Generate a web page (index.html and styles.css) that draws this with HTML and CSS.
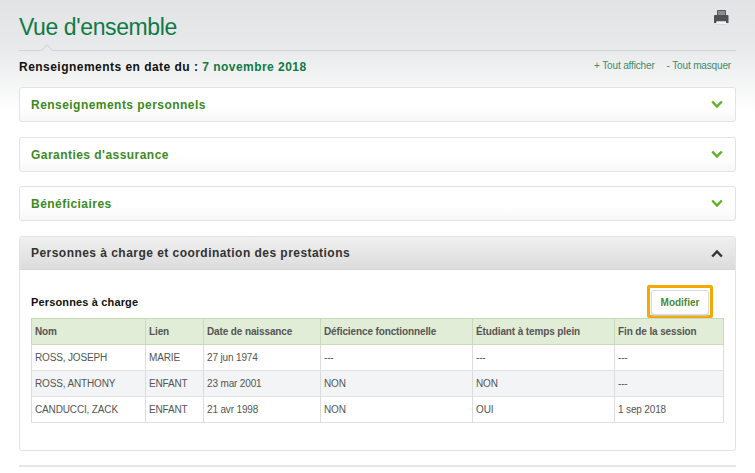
FILE: index.html
```html
<!DOCTYPE html>
<html lang="fr">
<head>
<meta charset="utf-8">
<title>Vue d'ensemble</title>
<link rel="stylesheet" href="styles.css">
</head>
<body>
<main class="page">
  <header class="head">
    <h1>Vue d'ensemble</h1>
    <svg class="print" width="16" height="18" viewBox="0 0 16 18" aria-hidden="true">
      <path fill="#8a8c8e" stroke="#55585a" d="M4.500 .5h8v5h-8z"/>
      <path fill="#4f5254" d="M2 5h12.500a1 1 0 0 1 1 1v7h-2.500v-1.500H3.500V13H1V6a1 1 0 0 1 1-1z"/>
      <path fill="#f4f4f4" d="M3.500 11.500h9.500V14H3.500z"/>
      <path fill="#d8d9da" d="M3 14h10.500v1H3z"/>
      <path fill="#e6e7e8" d="M2.500 15h11.500v2H2.500z"/>
    </svg>
  </header>
  <div class="rule"><span class="notch"></span></div>
  <div class="daterow">
    <p class="asof">Renseignements en date du : <span class="date">7 novembre 2018</span></p>
    <p class="toggles"><a>+ Tout afficher</a><a>- Tout masquer</a></p>
  </div>

  <section class="panel closed">
    <h2>Renseignements personnels</h2>
    <svg class="chev" width="12" height="9" viewBox="0 0 12 9" aria-hidden="true"><path d="M1.200 1.500 6 6.500l4.800-5" fill="none" stroke="#5cb31f" stroke-width="2.400"/></svg>
  </section>
  <section class="panel closed short">
    <h2>Garanties d'assurance</h2>
    <svg class="chev" width="12" height="9" viewBox="0 0 12 9" aria-hidden="true"><path d="M1.200 1.500 6 6.500l4.800-5" fill="none" stroke="#5cb31f" stroke-width="2.400"/></svg>
  </section>
  <section class="panel closed">
    <h2>Bénéficiaires</h2>
    <svg class="chev" width="12" height="9" viewBox="0 0 12 9" aria-hidden="true"><path d="M1.200 1.500 6 6.500l4.800-5" fill="none" stroke="#5cb31f" stroke-width="2.400"/></svg>
  </section>

  <section class="panel open">
    <div class="panelhead">
      <h2>Personnes à charge et coordination des prestations</h2>
      <svg class="chev" width="12" height="9" viewBox="0 0 12 9" aria-hidden="true"><path d="M1.200 7.500 6 2.500l4.800 5" fill="none" stroke="#333" stroke-width="2.400"/></svg>
    </div>
    <div class="panelbody">
      <div class="tabletop">
        <h3>Personnes à charge</h3>
        <div class="highlight"><button class="edit" type="button">Modifier</button></div>
      </div>
      <table>
        <colgroup>
          <col class="c1"><col class="c2"><col class="c3"><col class="c4"><col class="c5"><col class="c6">
        </colgroup>
        <thead>
          <tr><th>Nom</th><th>Lien</th><th>Date de naissance</th><th>Déficience fonctionnelle</th><th>Étudiant à temps plein</th><th>Fin de la session</th></tr>
        </thead>
        <tbody>
          <tr><td>ROSS, JOSEPH</td><td>MARIE</td><td>27 jun 1974</td><td>---</td><td>---</td><td>---</td></tr>
          <tr class="alt"><td>ROSS, ANTHONY</td><td>ENFANT</td><td>23 mar 2001</td><td>NON</td><td>NON</td><td>---</td></tr>
          <tr><td>CANDUCCI, ZACK</td><td>ENFANT</td><td>21 avr 1998</td><td>NON</td><td>OUI</td><td>1 sep 2018</td></tr>
        </tbody>
      </table>
    </div>
  </section>
  <div class="bottomline"></div>
</main>
</body>
</html>
```

FILE: styles.css
```css
* { box-sizing: border-box; }
html, body { margin: 0; height: 100%; }
body {
  font-family: "Liberation Sans", Arial, sans-serif;
  background: linear-gradient(#e2e3e5 0, #e9eaeb 50px, #ffffff 112px) no-repeat;
  overflow: hidden;
}
.page { width: 717px; margin-left: 19px; }
.head {
  display: flex;
  justify-content: space-between;
  align-items: flex-start;
  height: 50px;
  padding-top: 13px;
}
h1 {
  margin: 0;
  font-size: 23px;
  line-height: 28px;
  font-weight: 400;
  color: #0f7a45;
  letter-spacing: -0.4px;
}
.print { margin: -3px 7px 0 0; }
.rule { position: relative; height: 1px; background: #d3d4d6; }
.notch {
  position: absolute;
  left: 24px;
  top: -4px;
  width: 8px;
  height: 8px;
  transform: rotate(45deg);
  border-left: 1px solid #d3d4d6;
  border-top: 1px solid #d3d4d6;
  background: #eaebec;
}
.daterow {
  display: flex;
  justify-content: space-between;
  align-items: flex-start;
  height: 36px;
  padding-top: 9px;
}
.asof {
  margin: 0;
  font-size: 12px;
  line-height: 15px;
  font-weight: 700;
  color: #111;
  letter-spacing: 0.47px;
}
.date { color: #0f7a45; }
.toggles {
  display: flex;
  gap: 12px;
  margin: 0;
  font-size: 10px;
  line-height: 12px;
  color: #3d8a6b;
  padding-right: 5px;
  letter-spacing: -0.15px;
}
.panel {
  background: #fff;
  border: 1px solid #e3e3e3;
  border-radius: 3px;
}
h2 {
  margin: 0;
  font-size: 12px;
  font-weight: 700;
  letter-spacing: 0.46px;
}
.closed {
  display: flex;
  justify-content: space-between;
  align-items: center;
  height: 35px;
  margin-bottom: 15px;
  padding: 0 12px 0 11px;
  background: linear-gradient(#fff 60%, #f7f7f7);
}
.short { margin-bottom: 14px; }
.closed h2 { color: #3c8a1e; }
.open { height: 215px; }
.panelhead {
  display: flex;
  justify-content: space-between;
  align-items: center;
  height: 33px;
  padding: 0 12px 0 11px;
  background: linear-gradient(#f0f0f0, #dcdcdc);
  border-bottom: 1px solid #d6d6d6;
}
.panelhead h2 { color: #333; }
.panelbody { padding: 0 11px; }
.tabletop {
  display: flex;
  justify-content: space-between;
  align-items: flex-end;
  height: 48px;
}
h3 {
  margin: 0 0 9px;
  font-size: 11px;
  line-height: 13px;
  font-weight: 700;
  color: #111;
  letter-spacing: 0.15px;
}
.highlight {
  width: 66px;
  height: 33px;
  margin-right: 11px;
  padding: 2px 1px 0;
  border: 3px solid #f5a800;
  border-radius: 2px;
  background: #fff;
}
.edit {
  display: block;
  width: 58px;
  height: 25px;
  padding: 0;
  font-family: inherit;
  font-size: 10px;
  font-weight: 700;
  color: #4a8a35;
  background: #fff;
  border: 1px solid #dadada;
  border-radius: 3px;
  box-shadow: 0 1px 1px #ccc;
}
table {
  width: 692px;
  border-collapse: collapse;
  table-layout: fixed;
  font-size: 10px;
  color: #555;
  border: 1px solid #dcdcdc;
  border-top-width: 0;
}
.c1 { width: 114px; }
.c2 { width: 58px; }
.c3 { width: 117px; }
.c4 { width: 152px; }
.c5 { width: 142px; }
.c6 { width: 109px; }
th, td {
  height: 26px;
  padding: 0 3px;
  text-align: left;
  white-space: nowrap;
  border-left: 1px solid #dcdcdc;
  border-right: 1px solid #dcdcdc;
}
th {
  font-weight: 700;
  color: #555;
  background: #e1edd7;
  border-left-color: #c8dcb9;
  border-right-color: #c8dcb9;
  border-top: 1px solid #c8dcb9;
  border-bottom: 1px solid #c8dcb9;
  letter-spacing: -0.12px;
}
td {
  border-bottom: 1px solid #e0e0e0;
  letter-spacing: -0.15px;
}
.alt td { background: #f3f4f5; }
.bottomline {
  height: 2px;
  margin-top: 14px;
  background: #e6e6e6;
}
```
